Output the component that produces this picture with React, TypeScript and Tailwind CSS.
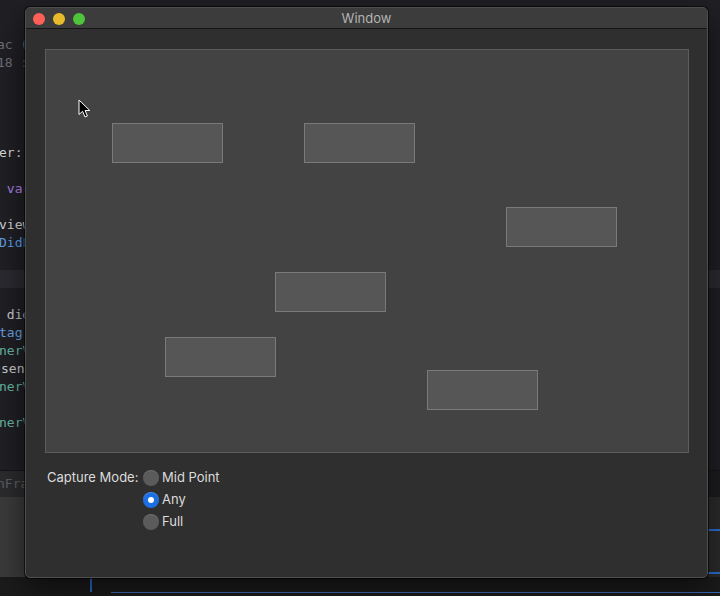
import React, { useState } from 'react';

type CodeLine = { text: string; color: string; shift?: number };

// visible slice of the Xcode editor behind the window, 18px per line
const codeLines: CodeLine[] = [
  { text: 'ac (', color: 'text-[#6e6f77]', shift: -3 },
  { text: '18 :', color: 'text-[#6e6f77]', shift: -3 },
  { text: '', color: '' },
  { text: '', color: '' },
  { text: '', color: '' },
  { text: '', color: '' },
  { text: 'er:', color: 'text-[#d6d6d8]', shift: -1 },
  { text: '', color: '' },
  { text: ' var', color: 'text-[#b07fe6]', shift: -1 },
  { text: '', color: '' },
  { text: 'view', color: 'text-[#d6d6d8]', shift: -1 },
  { text: 'DidL', color: 'text-[#5e9fe6]', shift: -1 },
  { text: '', color: '' },
  { text: '', color: '' },
  { text: '', color: '' },
  { text: ' did', color: 'text-[#c9c9cc]', shift: -1 },
  { text: 'tag', color: 'text-[#6aa0e0]', shift: -1 },
  { text: 'nerV', color: 'text-[#66b5a2]', shift: -1 },
  { text: 'send', color: 'text-[#c9c9cc]', shift: 1 },
  { text: 'nerV', color: 'text-[#66b5a2]', shift: -1 },
  { text: '', color: '' },
  { text: 'nerV', color: 'text-[#66b5a2]', shift: -1 },
];

const boxes = [
  { x: 66, y: 73 },
  { x: 258, y: 73 },
  { x: 460, y: 157 },
  { x: 229, y: 222 },
  { x: 119, y: 287 },
  { x: 381, y: 320 },
];

const modes = ['Mid Point', 'Any', 'Full'];

const Radio: React.FC<{ checked: boolean }> = ({ checked }) =>
  checked ? (
    <span className="w-4 h-4 rounded-full bg-[#1b6fe2] flex items-center justify-center shadow-[inset_0_1px_0_rgba(255,255,255,0.2)]">
      <span className="w-[6px] h-[6px] rounded-full bg-white" />
    </span>
  ) : (
    <span className="w-4 h-4 rounded-full bg-[#5b5b5b] shadow-[inset_0_1px_0_rgba(255,255,255,0.12)]" />
  );

export default function App() {
  const [mode, setMode] = useState('Any');

  return (
    <div className="relative w-[720px] h-[596px] overflow-hidden bg-[#1f1f24] font-['Inter','Liberation_Sans',sans-serif]">
      {/* background: editor */}
      <div className="flex flex-col h-full">
        <div className="h-[470px] pt-[36px] font-['DejaVu_Sans_Mono',monospace] text-[13px] leading-[18px] whitespace-pre">
          {codeLines.map((l, i) => (
            <div
              key={i}
              className={`h-[18px] ${i === 13 ? 'bg-[#2a2a30]' : ''} ${l.color}`}
              style={{ marginLeft: l.shift ?? 0 }}
            >
              {l.text}
            </div>
          ))}
        </div>
        <div className="h-[27px] flex border-t border-[#151517]">
          <div className="w-[25px] bg-[#2b2b2e] flex items-center text-[13px] text-[#5d5d61] font-['DejaVu_Sans_Mono',monospace] overflow-hidden whitespace-nowrap">
            <span className="-ml-[3px]">nFram</span>
          </div>
          <div className="flex-1" />
          <div className="w-[12px] bg-[#1c1c1e]" />
        </div>
        <div className="flex-1 flex">
          <div className="w-[25px] bg-[#3a3a3a]" />
          <div className="flex-1" />
          <div className="w-[12px] bg-[#2b2b2c] flex flex-col">
            <div className="h-[32px]" />
            <div className="h-[2px] bg-[#2a6fd1]" />
            <div className="h-[41px]" />
            <div className="h-[2px] bg-[#2a6fd1]" />
          </div>
        </div>
        <div className="h-[19px] bg-[#1b1b1c] relative">
          <div className="absolute left-[90px] top-0 w-[2px] h-[15px] bg-[#2a6fd1]" />
          <div className="absolute left-[111px] right-0 top-[15px] h-[1px] bg-[#3a6bb8]" />
        </div>
      </div>

      {/* window */}
      <div className="absolute left-[25px] top-[7px] w-[683px] h-[571px] rounded-[5px] border border-[#4e4e4e] bg-[#2f2f2f] shadow-[0_0_0_1px_rgba(0,0,0,0.6),0_12px_30px_rgba(0,0,0,0.55)] overflow-hidden flex flex-col">
        <div className="h-[21px] bg-[#3c3c3c] border-b border-[#141414] flex items-center relative">
          <div className="flex items-center gap-2 pl-[7px] pt-[1px]">
            <span className="w-3 h-3 rounded-full bg-[#fe5f57]" />
            <span className="w-3 h-3 rounded-full bg-[#e9bb2c]" />
            <span className="w-3 h-3 rounded-full bg-[#4fc33a]" />
          </div>
          <div className="absolute inset-0 pt-[2px] flex items-center justify-center text-[13px] text-[#b3b3b3]">
            Window
          </div>
        </div>

        <div className="flex-1 pt-[20px] px-[19px]">
          <div className="relative w-[644px] h-[404px] bg-[#434343] border border-[#5c5c5c]">
            {boxes.map((b, i) => (
              <div
                key={i}
                className="absolute w-[111px] h-[40px] bg-[#565656] border border-[#7a7a7a]"
                style={{ left: b.x, top: b.y }}
              />
            ))}
            <svg className="absolute left-[32px] top-[49px]" width="14" height="20" viewBox="0 0 14 20">
              <path d="M1 1 L1 15.5 L4.6 12.3 L7 18 L9.4 17 L7.1 11.5 L11.8 11.5 Z" fill="#000" stroke="#fff" strokeWidth="1" strokeLinejoin="round" />
            </svg>
          </div>

          <div className="mt-[14px] flex text-[13px] text-[#dcdcdc]">
            <div className="w-[98px] pl-[2px] h-[22px] flex items-center">Capture Mode:</div>
            <div className="flex flex-col">
              {modes.map((m) => (
                <label key={m} className="h-[22px] flex items-center gap-[3px] cursor-default" onClick={() => setMode(m)}>
                  <Radio checked={mode === m} />
                  <span>{m}</span>
                </label>
              ))}
            </div>
          </div>
        </div>
      </div>
    </div>
  );
}
